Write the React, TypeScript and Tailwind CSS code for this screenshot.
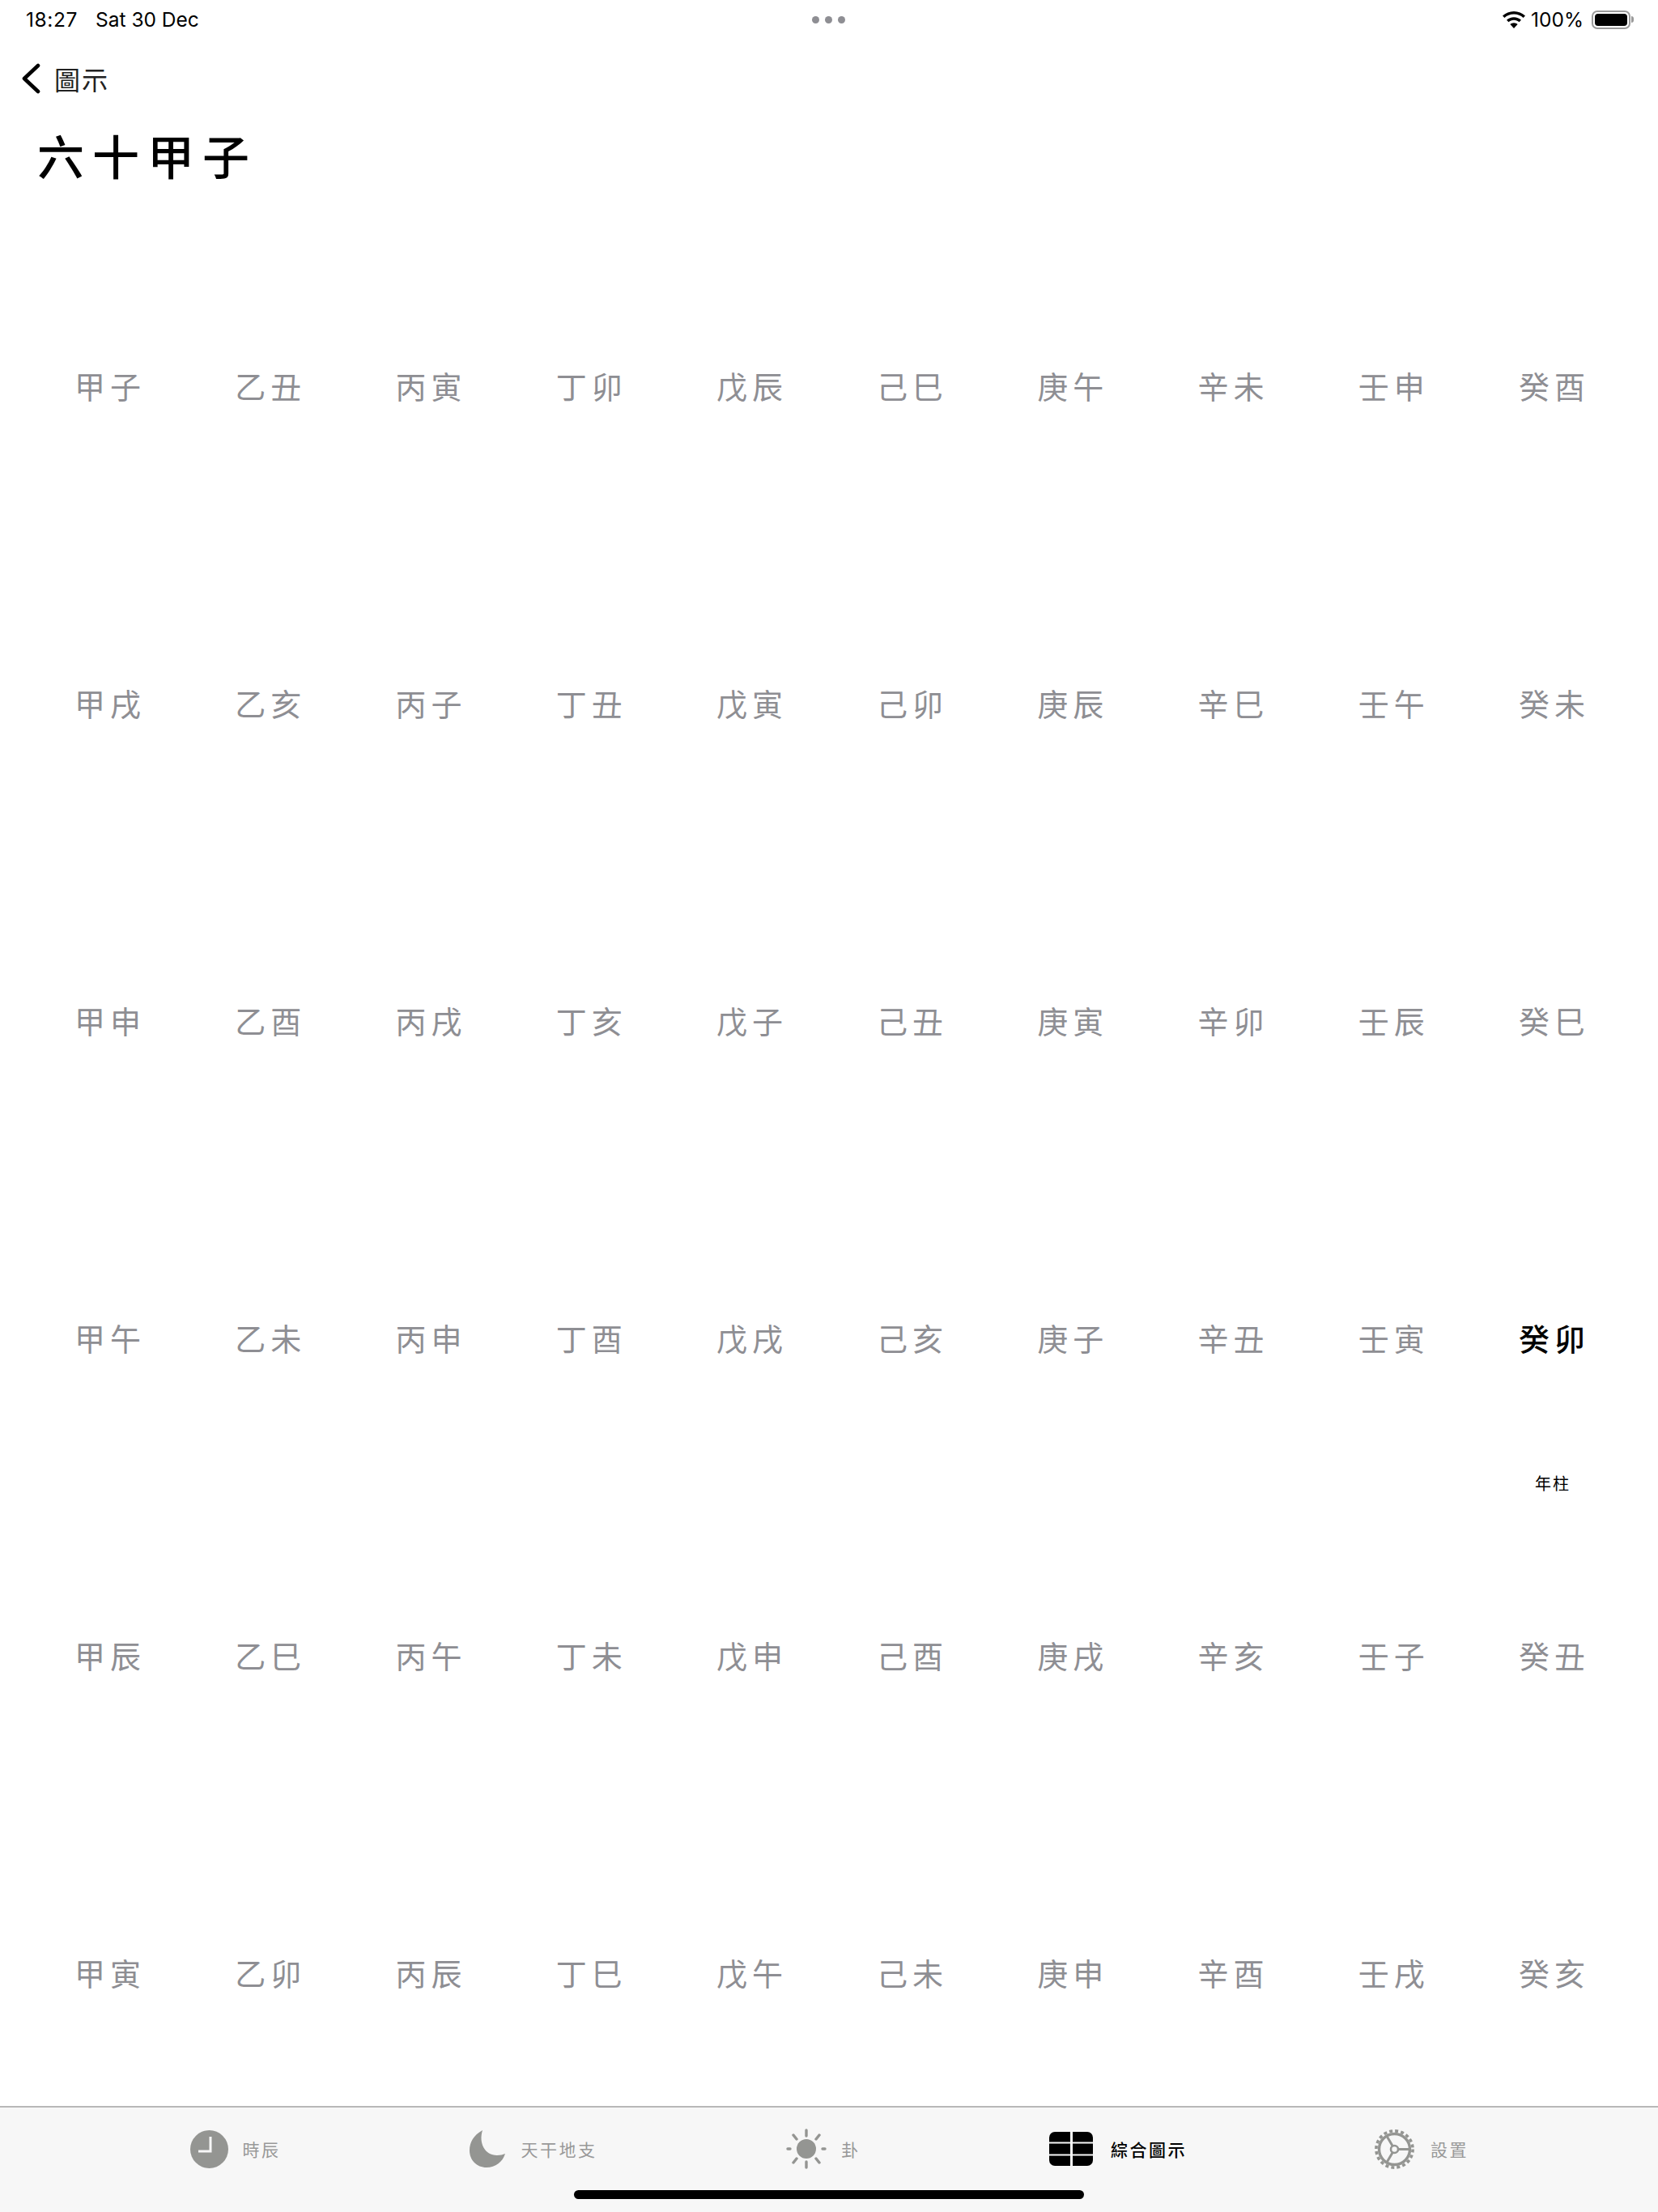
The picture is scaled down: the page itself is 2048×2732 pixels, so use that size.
const rows = [
  ["甲子", "乙丑", "丙寅", "丁卯", "戊辰", "己巳", "庚午", "辛未", "壬申", "癸酉"],
  ["甲戌", "乙亥", "丙子", "丁丑", "戊寅", "己卯", "庚辰", "辛巳", "壬午", "癸未"],
  ["甲申", "乙酉", "丙戌", "丁亥", "戊子", "己丑", "庚寅", "辛卯", "壬辰", "癸巳"],
  ["甲午", "乙未", "丙申", "丁酉", "戊戌", "己亥", "庚子", "辛丑", "壬寅", "癸卯"],
  ["甲辰", "乙巳", "丙午", "丁未", "戊申", "己酉", "庚戌", "辛亥", "壬子", "癸丑"],
  ["甲寅", "乙卯", "丙辰", "丁巳", "戊午", "己未", "庚申", "辛酉", "壬戌", "癸亥"],
];

const ClockIcon = () => (
  <svg width="47" height="47" viewBox="0 0 47 47">
    <circle cx="23.5" cy="23.5" r="23.5" fill="#949592" />
    <path d="M25 8v18H10" fill="none" stroke="#f7f7f7" strokeWidth="3" />
  </svg>
);

const MoonIcon = () => (
  <svg width="44" height="46" viewBox="0 0 44 46">
    <path d="M16 0C5 6 0 15 0 25c0 12 9 21 21 21 11 0 20-7 23-17-3 1-6 2-10 2C19 31 11 16 16 0z" fill="#949592" />
  </svg>
);

const SunIcon = () => (
  <svg width="50" height="50" viewBox="0 0 50 50">
    <circle cx="25" cy="25" r="12" fill="#949592" />
    <g stroke="#949592" strokeWidth="3.4" strokeLinecap="round">
      <path d="M25 2v7M25 41v7M2 25h3M45 25h3M9 8l4 5M37 37l4 5M41 8l-4 5M13 37l-4 5" />
    </g>
  </svg>
);

const GridIcon = () => (
  <svg width="54" height="42" viewBox="0 0 54 42">
    <rect width="54" height="42" rx="7" fill="#000" />
    <path d="M27.5 0v42" stroke="#f7f7f7" strokeWidth="3" />
    <path d="M0 13.5h54M0 28.5h54" stroke="#f7f7f7" strokeWidth="2" />
  </svg>
);

const GearIcon = () => (
  <svg width="49" height="49" viewBox="0 0 49 49" fill="none" stroke="#949592">
    <circle cx="24.5" cy="24.5" r="22.6" strokeWidth="3.6" strokeDasharray="4 3.1" />
    <circle cx="24.5" cy="24.5" r="19" strokeWidth="3.4" />
    <circle cx="24.5" cy="24.5" r="4.5" strokeWidth="2.6" />
    <path d="M29 24.5h15M22.2 20.6 14.5 7.5M22.2 28.4l-7.7 13" strokeWidth="3" />
  </svg>
);

const tabs = [
  { label: "時辰", icon: <ClockIcon />, cls: "w-[365px] gap-[18px]" },
  { label: "天干地支", icon: <MoonIcon />, cls: "w-[363px] gap-[20px] pl-[8px]" },
  { label: "卦", icon: <SunIcon />, cls: "w-[362px] gap-[18px]" },
  { label: "綜合圖示", icon: <GridIcon />, cls: "w-[370px] gap-[22px] pr-[4px]", active: true },
  { label: "設置", icon: <GearIcon />, cls: "w-[376px] gap-[20px]" },
];

const cjk = "font-['Noto_Sans_CJK_TC',sans-serif]";

export default function App() {
  return (
    <div className={`flex h-[2732px] w-[2048px] flex-col overflow-hidden bg-white text-black ${cjk}`}>
      {/* status bar */}
      <div className="relative flex h-12 shrink-0 items-center justify-between pl-8 pr-[30px] font-['Inter',sans-serif] text-[24.5px] leading-none">
        <div className="flex gap-[22px]">
          <span className="tracking-[0.6px]">18:27</span>
          <span>Sat 30 Dec</span>
        </div>
        <div className="absolute left-[1003px] top-5 flex gap-[7px]">
          <span className="h-[9px] w-[9px] rounded-full bg-[#8e8e93]" />
          <span className="h-[9px] w-[9px] rounded-full bg-[#8e8e93]" />
          <span className="h-[9px] w-[9px] rounded-full bg-[#8e8e93]" />
        </div>
        <div className="flex items-center">
          <svg width="28" height="21" viewBox="0 0 28 21" className="mr-[7px]">
            <path d="M14 0c5.4 0 10.3 2.1 14 5.5l-2.4 2.6C22.6 5.3 18.5 3.6 14 3.6S5.4 5.3 2.4 8.100L0 5.500C3.700 2.100 8.600 0 14 0z" />
            <path d="M14 7.200c3.500 0 6.600 1.300 9 3.500l-2.500 2.600C18.800 11.700 16.500 10.800 14 10.800s-4.800.9-6.500 2.500L5 10.700c2.400-2.200 5.500-3.500 9-3.500z" />
            <path d="M14 14.300c1.800 0 3.400.7 4.600 1.800L14 21l-4.600-4.900c1.200-1.100 2.800-1.800 4.600-1.800z" />
          </svg>
          <span>100%</span>
          <div className="ml-[10px] flex items-center">
            <div className="h-[23px] w-[48px] rounded-[7px] border-2 border-[#9a9a9a] p-[2px]">
              <div className="h-full w-full rounded-[4px] bg-black" />
            </div>
            <div className="ml-[1px] h-[8px] w-[3px] rounded-r-full bg-[#9a9a9a]" />
          </div>
        </div>
      </div>

      {/* nav */}
      <div className="flex h-[98px] shrink-0 items-center pl-[27px]">
        <svg width="23" height="38" viewBox="0 0 23 38" fill="none" stroke="#000" strokeWidth="4.600" strokeLinecap="round" strokeLinejoin="round">
          <path d="M20 3 3 19l17 16" />
        </svg>
        <span className="ml-[17px] text-[32px] leading-none tracking-[2px] text-[#222]">圖示</span>
      </div>

      {/* title */}
      <div className="flex h-[90px] shrink-0 items-center pl-[46px] text-[58px] font-medium leading-none tracking-[10px]">
        六十甲子
      </div>

      {/* sexagenary grid */}
      <div className="grid flex-1 auto-rows-[64px] grid-cols-10 content-start gap-y-[328px] pl-[34px] pr-[32px] pt-[208px]">
        {rows.flat().map((pair) => {
          const isYear = pair === "癸卯";
          return (
            <div key={pair} className="flex flex-col items-center">
              <div className={`flex h-16 shrink-0 items-center pl-[6px] text-[38px] leading-none tracking-[6px] ${isYear ? "font-medium text-black" : "text-[#8e8e93]"}`}>
                {pair}
              </div>
              {isYear && <div className="mt-[136px] shrink-0 pl-[2px] text-[20px] leading-6 tracking-[2px]">年柱</div>}
            </div>
          );
        })}
      </div>

      {/* tab bar */}
      <div className="flex h-[131px] shrink-0 flex-col border-t-2 border-[#b8b8b8] bg-[#f7f7f7]">
        <div className="flex h-[102px] items-center pl-[108px]">
          {tabs.map((t) => (
            <div key={t.label} className={`flex items-center justify-center ${t.cls}`}>
              {t.icon}
              <span className={`text-[21px] leading-none tracking-[2.5px] ${t.active ? "font-medium text-black" : "text-[#999]"}`}>{t.label}</span>
            </div>
          ))}
        </div>
        <div className="mx-auto h-[11px] w-[630px] rounded-full bg-black" />
      </div>
    </div>
  );
}
